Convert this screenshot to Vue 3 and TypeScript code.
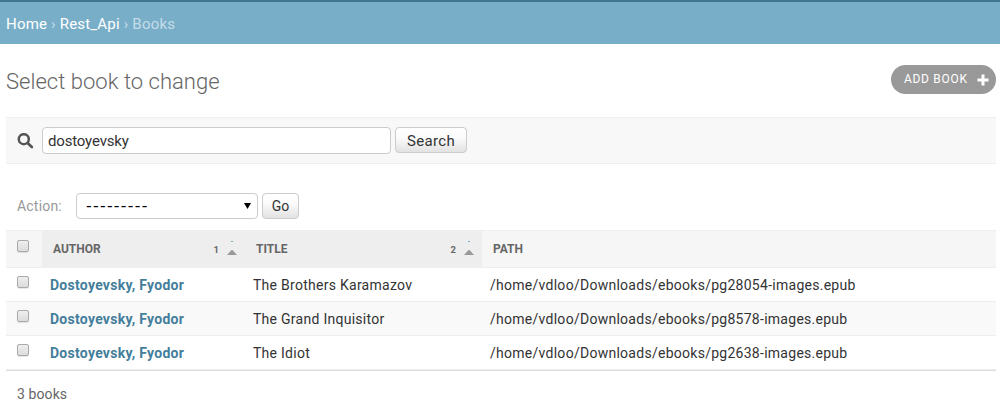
<script setup lang="ts">
import { ref } from 'vue'

interface Book {
  author: string
  title: string
  path: string
}

interface Column {
  label: string
  key: string
  priority?: number
}

const query = ref('dostoyevsky')

const columns: Column[] = [
  { label: 'Author', key: 'author', priority: 1 },
  { label: 'Title', key: 'title', priority: 2 },
  { label: 'Path', key: 'path' },
]

const books: Book[] = [
  { author: 'Dostoyevsky, Fyodor', title: 'The Brothers Karamazov', path: '/home/vdloo/Downloads/ebooks/pg28054-images.epub' },
  { author: 'Dostoyevsky, Fyodor', title: 'The Grand Inquisitor', path: '/home/vdloo/Downloads/ebooks/pg8578-images.epub' },
  { author: 'Dostoyevsky, Fyodor', title: 'The Idiot', path: '/home/vdloo/Downloads/ebooks/pg2638-images.epub' },
]
</script>

<template>
  <div class="page">
    <nav class="breadcrumbs">
      <a>Home</a> › <a class="app">Rest_Api</a> › <span>Books</span>
    </nav>
    <main class="content">
      <header class="heading">
        <h1>Select book to change</h1>
        <a class="add">
          <span>Add book</span>
          <svg width="12" height="12" viewBox="0 0 12 12"><path d="M4.5 .5h3v4h4v3h-4v4h-3v-4h-4v-3h4z" fill="#fff" /></svg>
        </a>
      </header>

      <form class="toolbar" @submit.prevent>
        <svg class="glass" width="17" height="17" viewBox="0 0 17 17" fill="none" stroke="#555">
          <circle cx="6.8" cy="6.2" r="5" stroke-width="2.5" />
          <path d="M10.6 10l4.2 4" stroke-width="2.8" stroke-linecap="round" />
        </svg>
        <input v-model="query" class="query" type="text" spellcheck="false" />
        <button class="btn search">Search</button>
      </form>

      <div class="actions">
        <span class="label">Action:</span>
        <div class="select">
          <span class="blank">---------</span>
          <svg width="7" height="6" viewBox="0 0 7 6"><path d="M0 0h7L3.5 6z" fill="#000" /></svg>
        </div>
        <button class="btn go">Go</button>
      </div>

      <div class="results">
        <div class="row head">
          <div class="cell check"><i class="box"></i></div>
          <div v-for="c in columns" :key="c.key" class="cell" :class="{ sorted: c.priority }">
            <span class="name">{{ c.label }}</span>
            <template v-if="c.priority">
              <span class="priority">{{ c.priority }}</span>
              <span class="sort">
                <i class="tick"></i>
                <svg width="10" height="5" viewBox="0 0 10 5"><path d="M0 5L4.5 0h1L10 5z" fill="#999" /></svg>
              </span>
            </template>
          </div>
        </div>
        <div v-for="b in books" :key="b.path" class="row">
          <div class="cell check"><i class="box"></i></div>
          <div class="cell author">{{ b.author }}</div>
          <div class="cell">{{ b.title }}</div>
          <div class="cell">{{ b.path }}</div>
        </div>
      </div>
      <p class="count">{{ books.length }} books</p>
    </main>
  </div>
</template>

<style>
html,
body {
  margin: 0;
  background: #fff;
}
</style>

<style scoped>
* {
  box-sizing: border-box;
}
.page {
  height: 412px;
  overflow: hidden;
  font: 14px/20px Roboto, sans-serif;
  color: #333;
}
.breadcrumbs {
  height: 44px;
  border-top: 2px solid #417690;
  background: #79aec8;
  color: #c4dce8;
  padding: 12px 6px 0;
  font-size: 15px;
  letter-spacing: 0.2px;
}
.breadcrumbs a {
  color: #fff;
}
.content {
  padding: 0 4px 0 6px;
}
.heading {
  height: 73px;
  display: flex;
  justify-content: space-between;
  align-items: flex-start;
  padding-top: 21px;
}
h1 {
  margin: 3px 0 0;
  font-size: 22px;
  line-height: 28px;
  font-weight: 300;
  letter-spacing: 0.03px;
  color: #666;
}
.add {
  width: 105px;
  height: 29px;
  border-radius: 15px;
  background: #999;
  color: #fff;
  font-size: 12px;
  letter-spacing: 0.7px;
  text-transform: uppercase;
  display: flex;
  align-items: center;
  justify-content: space-between;
  padding: 0 7px 1px 13px;
}
.add svg {
  margin-top: 2px;
}
.toolbar {
  height: 47px;
  background: #f8f8f8;
  border-top: 1px solid #eee;
  border-bottom: 1px solid #eee;
  display: flex;
  align-items: flex-start;
  padding: 9px 0 0 11px;
}
.glass {
  margin: 6px 8px 0 0;
}
.query {
  width: 349px;
  height: 27px;
  border: 1px solid #ccc;
  border-radius: 4px;
  background: #fff;
  color: #333;
  font: 15px Roboto, sans-serif;
  letter-spacing: -0.17px;
  padding: 0 5px;
  outline: none;
}
.btn {
  height: 26px;
  border: 1px solid #ccc;
  border-radius: 4px;
  background: linear-gradient(#fff, #fbfbfb 40%, #e2e2e2);
  color: #333;
  font: 15px Roboto, sans-serif;
  padding: 0;
  margin-left: 4px;
}
.search {
  width: 72px;
  padding-top: 1px;
  letter-spacing: 0.35px;
}
.go {
  width: 37px;
  font-size: 14px;
}
.actions {
  height: 66px;
  padding: 29px 0 0 11px;
  display: flex;
  align-items: flex-start;
}
.label {
  width: 59px;
  color: #999;
  line-height: 26px;
  letter-spacing: 0.2px;
}
.select {
  width: 182px;
  height: 26px;
  border: 1px solid #ccc;
  border-radius: 4px;
  display: flex;
  align-items: center;
  justify-content: space-between;
  padding: 0 6px 0 9px;
  color: #000;
}
.select svg {
  margin-bottom: 1px;
}
.blank {
  font-family: 'Liberation Sans', sans-serif;
  font-size: 17px;
  letter-spacing: 1.3px;
}
.row {
  display: grid;
  grid-template-columns: 36px 203px 237px 1fr;
  height: 34px;
  border-bottom: 1px solid #eee;
}
.row:nth-child(3) {
  background: #f9f9f9;
}
.results {
  border-bottom: 1px solid #ddd;
}
.cell {
  padding: 7px 8px 0;
  white-space: nowrap;
  letter-spacing: 0.27px;
}
.author {
  color: #447e9b;
  font-weight: 700;
}
.head {
  height: 38px;
  border-top: 1px solid #eee;
  background: #f6f6f6;
}
.head .cell {
  display: flex;
  padding: 8px 8px 0 11px;
  font-size: 12px;
  font-weight: 700;
  letter-spacing: 0;
  color: #666;
  text-transform: uppercase;
}
.head .sorted {
  background: #eee;
  margin-bottom: -1px;
}
.name {
  flex: 1;
}
.priority {
  font-size: 9.5px;
  margin: 1px 8px 0 0;
}
.sort {
  width: 10px;
  display: flex;
  flex-direction: column;
  align-items: center;
}
.tick {
  width: 2px;
  height: 1px;
  margin: 2px 0 8px;
  background: #79aec8;
}
.check {
  padding: 8px 0 0 11px;
}
.head .check {
  padding: 9px 0 0 11px;
}
.box {
  display: block;
  width: 12px;
  height: 12px;
  border: 1px solid #aaa;
  border-radius: 2px;
  background: linear-gradient(#eee, #dcdcdc);
  box-shadow: 0 1px 1px rgba(0, 0, 0, 0.1);
}
.count {
  margin: 0;
  padding: 13px 11px 0;
  color: #666;
  letter-spacing: 0.1px;
}
</style>
